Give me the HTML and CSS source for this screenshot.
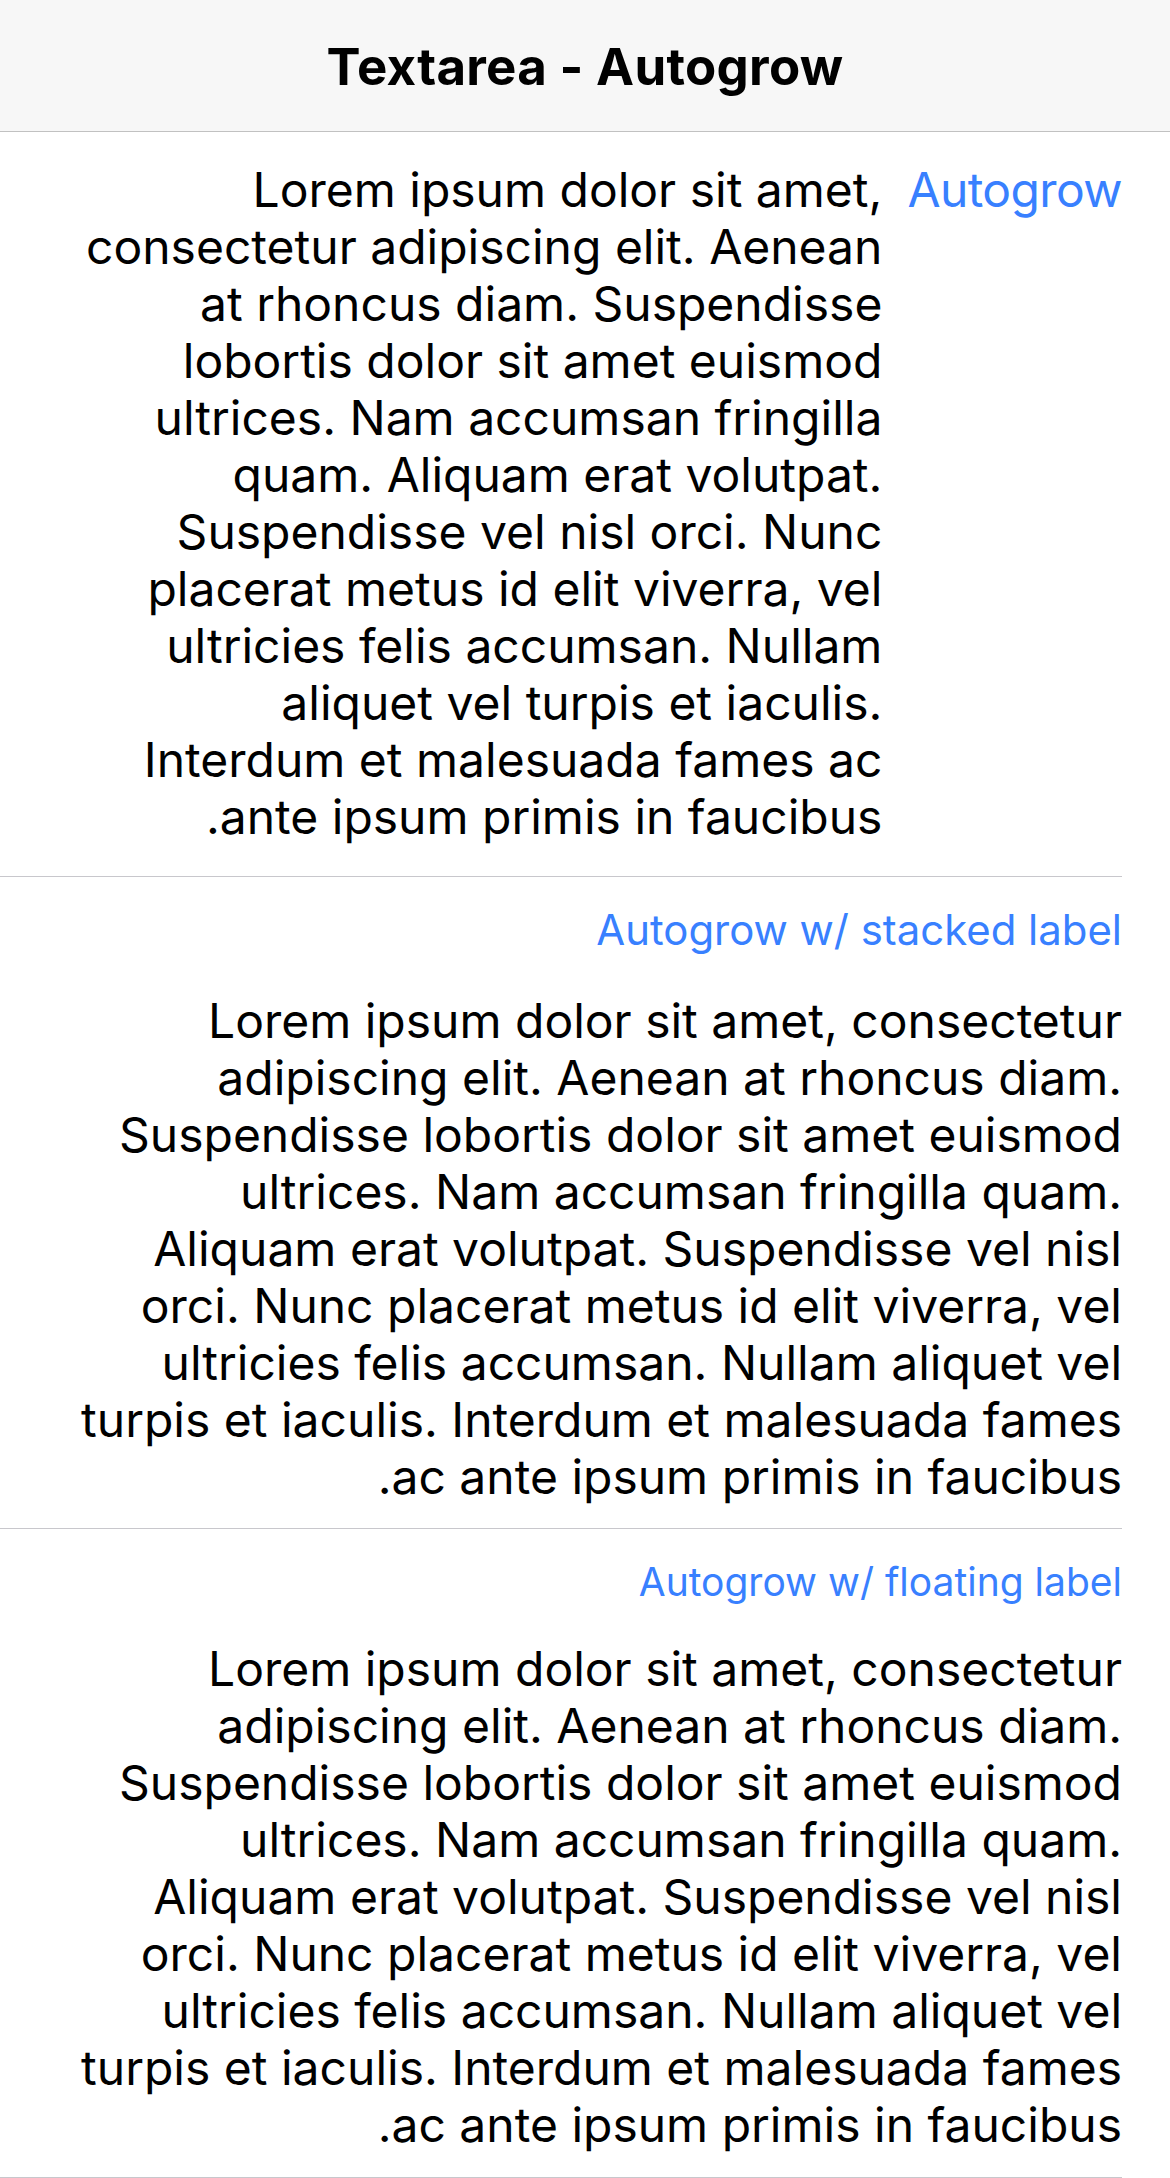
FILE: index.html
```html
<!DOCTYPE html>
<html lang="en" dir="rtl">
<head>
<meta charset="utf-8">
<title>Textarea - Autogrow</title>
<link rel="stylesheet" href="styles.css">
</head>
<body>
<header class="toolbar">
  <h1 class="title">Textarea - Autogrow</h1>
</header>
<main class="list">
  <div class="item">
    <div class="item-inner item-inline">
      <label class="label label-inline">Autogrow</label>
      <div class="textarea">
        <div class="ln">Lorem ipsum dolor sit amet,</div>
        <div class="ln">consectetur adipiscing elit. Aenean</div>
        <div class="ln">at rhoncus diam. Suspendisse</div>
        <div class="ln">lobortis dolor sit amet euismod</div>
        <div class="ln">ultrices. Nam accumsan fringilla</div>
        <div class="ln">quam. Aliquam erat volutpat.</div>
        <div class="ln">Suspendisse vel nisl orci. Nunc</div>
        <div class="ln">placerat metus id elit viverra, vel</div>
        <div class="ln">ultricies felis accumsan. Nullam</div>
        <div class="ln">aliquet vel turpis et iaculis.</div>
        <div class="ln">Interdum et malesuada fames ac</div>
        <div class="ln ln-last">ante ipsum primis in faucibus.</div>
      </div>
    </div>
  </div>
  <div class="item">
    <div class="item-inner item-stacked">
      <label class="label label-stacked">Autogrow w/ stacked label</label>
      <div class="textarea textarea-stacked">
        <div class="ln">Lorem ipsum dolor sit amet, consectetur</div>
        <div class="ln">adipiscing elit. Aenean at rhoncus diam.</div>
        <div class="ln">Suspendisse lobortis dolor sit amet euismod</div>
        <div class="ln">ultrices. Nam accumsan fringilla quam.</div>
        <div class="ln">Aliquam erat volutpat. Suspendisse vel nisl</div>
        <div class="ln">orci. Nunc placerat metus id elit viverra, vel</div>
        <div class="ln">ultricies felis accumsan. Nullam aliquet vel</div>
        <div class="ln">turpis et iaculis. Interdum et malesuada fames</div>
        <div class="ln ln-last">ac ante ipsum primis in faucibus.</div>
      </div>
    </div>
  </div>
  <div class="item">
    <div class="item-inner item-floating">
      <label class="label label-floating">Autogrow w/ floating label</label>
      <div class="textarea textarea-floating">
        <div class="ln">Lorem ipsum dolor sit amet, consectetur</div>
        <div class="ln">adipiscing elit. Aenean at rhoncus diam.</div>
        <div class="ln">Suspendisse lobortis dolor sit amet euismod</div>
        <div class="ln">ultrices. Nam accumsan fringilla quam.</div>
        <div class="ln">Aliquam erat volutpat. Suspendisse vel nisl</div>
        <div class="ln">orci. Nunc placerat metus id elit viverra, vel</div>
        <div class="ln">ultricies felis accumsan. Nullam aliquet vel</div>
        <div class="ln">turpis et iaculis. Interdum et malesuada fames</div>
        <div class="ln ln-last">ac ante ipsum primis in faucibus.</div>
      </div>
    </div>
  </div>
</main>
</body>
</html>
```
FILE: styles.css
```css
html, body {
  margin: 0;
  padding: 0;
  background: #ffffff;
}

body {
  font-family: "Inter", "Noto Sans", sans-serif;
  color: #000000;
  -webkit-font-smoothing: antialiased;
}

.toolbar {
  height: 131px;
  background: #f7f7f7;
  border-bottom: 1px solid #c1c1c1;
  display: flex;
  align-items: center;
  justify-content: center;
}

.title {
  margin: 0;
  font-size: 51px;
  font-weight: 700;
  line-height: 62px;
  padding-top: 3px;
  letter-spacing: 0.3px;
  color: #000000;
}

.list {
  display: flex;
  flex-direction: column;
}

.item {
  padding-right: 48px;
}

.item-inner {
  border-bottom: 1px solid #c8c7cc;
}

.item-inline {
  display: flex;
  flex-direction: row;
  align-items: flex-start;
  padding-top: 28.85px;
  padding-bottom: 31.15px;
}

.item-stacked {
  display: flex;
  flex-direction: column;
  padding-top: 29px;
  padding-bottom: 23.05px;
}

.item-floating {
  display: flex;
  flex-direction: column;
  padding-top: 29.35px;
  padding-bottom: 24.05px;
}

.label {
  color: #3880ff;
  white-space: nowrap;
}

.label-inline {
  flex: 0 0 auto;
  font-size: 48px;
  line-height: 57px;
  letter-spacing: -0.6px;
  margin-left: 25px;
}

.label-stacked {
  font-size: 41.9px;
  line-height: 48px;
  text-align: right;
}

.label-floating {
  font-size: 39px;
  line-height: 48px;
  text-align: right;
}

.textarea {
  flex: 1 1 auto;
  font-size: 48px;
  line-height: 57px;
}

.textarea-stacked {
  margin-top: 37.95px;
}

.textarea-floating {
  margin-top: 33.6px;
}

.ln {
  direction: ltr;
  text-align: right;
  white-space: nowrap;
}

.ln-last {
  direction: rtl;
}
```
